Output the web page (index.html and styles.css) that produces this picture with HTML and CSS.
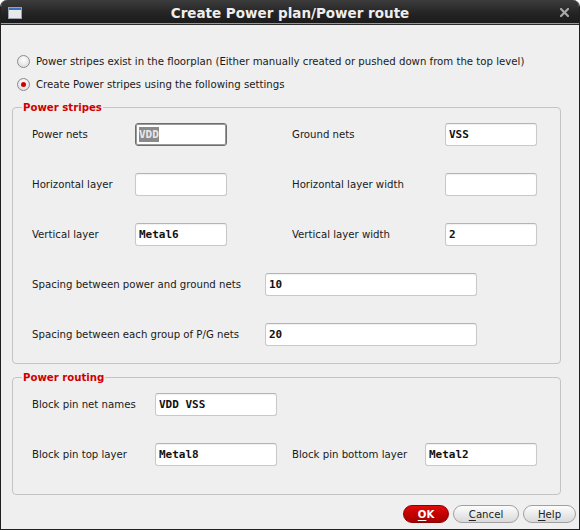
FILE: index.html
```html
<!DOCTYPE html>
<html>
<head>
<meta charset="utf-8">
<link rel="stylesheet" href="styles.css">
</head>
<body>
<div class="window">
  <div class="titlebar">
    <svg class="appicon" width="14" height="12" viewBox="0 0 14 12">
      <rect x="0.5" y="0.5" width="13" height="11" fill="#e9e9e9" stroke="#9aa3ad"/>
      <rect x="1" y="1" width="12" height="2" fill="#3d6fc0"/>
    </svg>
    <div class="title">Create Power plan/Power route</div>
    <svg class="close" width="9" height="9" viewBox="0 0 9 9">
      <path d="M1 1 L8 8 M8 1 L1 8" stroke="#a8a8a8" stroke-width="2.2" stroke-linecap="square"/>
    </svg>
  </div>
  <div class="content">
    <div class="radios">
      <div class="radio-row"><span class="radio"></span><span>Power stripes exist in the floorplan (Either manually created or pushed down from the top level)</span></div>
      <div class="radio-row"><span class="radio checked"></span><span>Create Power stripes using the following settings</span></div>
    </div>
    <fieldset class="group stripes">
      <legend>Power stripes</legend>
      <div class="rows">
        <div class="row">
          <span class="lbl w103">Power nets</span>
          <div class="field w92 focus"><span class="sel">VDD</span></div>
          <span class="lbl w153 ml65">Ground nets</span>
          <div class="field w92">VSS</div>
        </div>
        <div class="row">
          <span class="lbl w103">Horizontal layer</span>
          <div class="field w92"></div>
          <span class="lbl w153 ml65">Horizontal layer width</span>
          <div class="field w92"></div>
        </div>
        <div class="row">
          <span class="lbl w103">Vertical layer</span>
          <div class="field w92">Metal6</div>
          <span class="lbl w153 ml65">Vertical layer width</span>
          <div class="field w92">2</div>
        </div>
        <div class="row">
          <span class="lbl w233">Spacing between power and ground nets</span>
          <div class="field w212">10</div>
        </div>
        <div class="row">
          <span class="lbl w233">Spacing between each group of P/G nets</span>
          <div class="field w212">20</div>
        </div>
      </div>
    </fieldset>
    <fieldset class="group routing">
      <legend>Power routing</legend>
      <div class="rows">
        <div class="row">
          <span class="lbl w123">Block pin net names</span>
          <div class="field w122">VDD VSS</div>
        </div>
        <div class="row">
          <span class="lbl w123">Block pin top layer</span>
          <div class="field w122">Metal8</div>
          <span class="lbl w133 ml15">Block pin bottom layer</span>
          <div class="field w112">Metal2</div>
        </div>
      </div>
    </fieldset>
  </div>
  <div class="buttons">
    <div class="btn ok"><u>O</u>K</div>
    <div class="btn cancel"><u>C</u>ancel</div>
    <div class="btn help"><u>H</u>elp</div>
  </div>
</div>
</body>
</html>
```
FILE: styles.css
```css
html, body {
  margin: 0;
  padding: 0;
  background: #ffffff;
}

.window {
  width: 580px;
  height: 530px;
  box-sizing: border-box;
  display: flex;
  flex-direction: column;
  background: #efefef;
  border: 1px solid #202020;
  border-top: none;
  border-radius: 7px 7px 0 0;
  overflow: hidden;
  font-family: "DejaVu Sans Condensed", "Liberation Sans", sans-serif;
  font-size: 11.3px;
  color: #1a1a1a;
}

.titlebar {
  height: 23px;
  flex: none;
  display: grid;
  grid-template-columns: 1fr auto 1fr;
  align-items: center;
  background: linear-gradient(#3c3c3c, #232323 60%, #1b1b1b);
  border-bottom: 1px solid #7f9cc8;
  box-shadow: 0 1px 0 #2a2a2a;
  margin-bottom: 1px;
}

.appicon {
  justify-self: start;
  margin-left: 7px;
  margin-top: 2px;
}

.title {
  font-family: "DejaVu Sans", sans-serif;
  font-weight: bold;
  font-size: 13.5px;
  color: #eeeeee;
  padding-top: 2px;
}

.close {
  justify-self: end;
  margin-right: 10px;
  margin-top: 2px;
}

.content {
  flex: none;
  padding: 25px 18px 0 11px;
}

.radios {
  display: flex;
  flex-direction: column;
}

.radio-row {
  height: 23px;
  display: flex;
  align-items: center;
  gap: 6px;
  padding-left: 5px;
}

.radio {
  width: 11px;
  height: 11px;
  border-radius: 50%;
  border: 1px solid #8c8c8c;
  background: radial-gradient(circle at 50% 35%, #ffffff, #dedede 80%);
  position: relative;
  flex: none;
}

.radio.checked::after {
  content: "";
  position: absolute;
  left: 3px;
  top: 3px;
  width: 5px;
  height: 5px;
  border-radius: 50%;
  background: #d00000;
}

.group {
  margin: 0;
  border: 1px solid #c4c4c4;
  border-radius: 4px;
  padding: 0 0 0 19px;
}

.group legend {
  margin-left: -10px;
  padding: 0 1px;
  color: #d00000;
  font-weight: bold;
  font-size: 11.3px;
  line-height: 15px;
}

.stripes {
  margin-top: 4px;
  padding-top: 8px;
  padding-bottom: 17px;
}

.routing {
  margin-top: 6px;
  padding-top: 8px;
  padding-bottom: 28px;
}

.rows {
  display: flex;
  flex-direction: column;
  gap: 27px;
}

.row {
  display: flex;
  align-items: center;
  height: 23px;
}

.lbl {
  flex: none;
  white-space: nowrap;
}

.w103 { width: 103px; }
.w123 { width: 123px; }
.w133 { width: 133px; }
.w153 { width: 153px; }
.w233 { width: 233px; }
.ml65 { margin-left: 65px; }
.ml15 { margin-left: 15px; }

.field {
  flex: none;
  height: 23px;
  box-sizing: border-box;
  border: 1px solid #c9c9c9;
  border-top-color: #b4b4b4;
  border-radius: 3px;
  background: #ffffff;
  box-shadow: inset 0 1px 1px rgba(0, 0, 0, 0.06);
  padding: 0 3px;
  display: flex;
  align-items: center;
  font-family: "DejaVu Sans Mono", "Liberation Mono", monospace;
  font-weight: bold;
  font-size: 11px;
  color: #111111;
}

.field.focus {
  border: 1px solid #6e6e6e;
  box-shadow: inset 0 0 0 1px #9a9a9a;
}

.sel {
  background: #8a8a8a;
  color: #e8e8e8;
  line-height: 15px;
}

.w92 { width: 92px; }
.w112 { width: 112px; }
.w122 { width: 122px; }
.w212 { width: 212px; }

.buttons {
  display: flex;
  justify-content: flex-end;
  gap: 4px;
  padding: 10px 3px 0 0;
}

.btn {
  height: 18px;
  box-sizing: border-box;
  border-radius: 9px;
  display: flex;
  align-items: center;
  justify-content: center;
  font-size: 11.3px;
}

.btn u {
  text-decoration-thickness: 1px;
  text-underline-offset: 2px;
}

.ok {
  width: 46px;
  background: linear-gradient(#e00a0a, #c00000 55%, #a80000);
  border: 1px solid #8c0000;
  color: #ffffff;
  font-weight: bold;
}

.cancel, .help {
  background: linear-gradient(#fdfdfd, #e9e9e9 55%, #d9d9d9);
  border: 1px solid #a0a0a0;
  color: #222222;
}

.cancel { width: 66px; }
.help { width: 53px; }
```
